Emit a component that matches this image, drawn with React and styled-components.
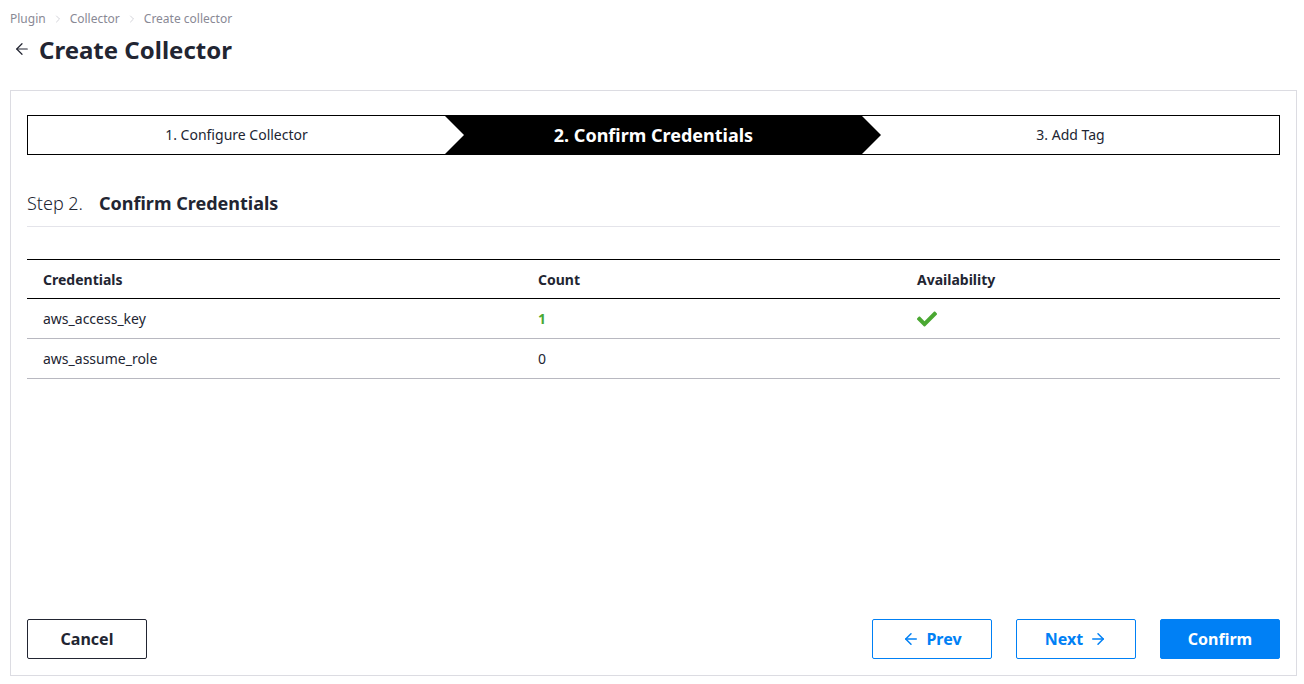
import React from "react";
import styled, {createGlobalStyle} from "styled-components";
import {ArrowLeft, ArrowRight, ChevronRight} from "lucide-react";
import {FaCheck} from "react-icons/fa";

const GlobalStyle = createGlobalStyle`
  html, body {
    margin: 0;
    padding: 0;
    background: #fff;
    font-family: "Noto Sans", "Open Sans", sans-serif;
    color: #222532;
  }
  * {
    box-sizing: border-box;
  }
`;

const Page = styled.div`
  padding: 10px 7px 8px 10px;
  display: flex;
  flex-direction: column;
`;

const Breadcrumb = styled.nav`
  display: flex;
  align-items: center;
  gap: 6px;
  font-size: 12px;
  line-height: 18px;
  color: #898995;
  margin-bottom: 3px;
`;

const Crumb = styled.span`
  color: #898995;
`;

const Sep = styled.span`
  display: inline-flex;
  color: #c4c4cc;
`;

const TitleRow = styled.div`
  display: flex;
  align-items: center;
  gap: 8px;
  height: 36px;
  margin-bottom: 23px;
  padding-left: 3px;
`;

const Title = styled.h1`
  margin: 0;
  font-size: 24px;
  font-weight: 700;
  color: #222532;
`;

const Panel = styled.section`
  border: 1px solid #dcdce2;
  height: 586px;
  padding: 24px 16px 16px 16px;
  display: flex;
  flex-direction: column;
`;

const Stepper = styled.ol`
  list-style: none;
  margin: 0;
  padding: 0;
  display: flex;
  height: 40px;
  border: 1px solid #000;
  overflow: hidden;
`;

const Step = styled.li`
  position: relative;
  flex: 1;
  display: flex;
  align-items: center;
  justify-content: center;
  padding-bottom: ${p => (p.$active ? "0" : "1px")};
  font-size: ${p => (p.$active ? "18px" : "14px")};
  font-weight: ${p => (p.$active ? 700 : 400)};
  color: ${p => (p.$active ? "#fff" : "#222532")};

  &::before {
    content: "";
    display: ${p => (p.$active ? "block" : "none")};
    position: absolute;
    top: 0;
    bottom: 0;
    left: 0;
    right: -19px;
    background: #000;
    clip-path: polygon(0 0, calc(100% - 19px) 0, 100% 50%, calc(100% - 19px) 100%, 0 100%, 19px 50%);
  }
`;

const StepLabel = styled.span`
  position: relative;
  z-index: 1;
`;

const SectionHead = styled.div`
  display: flex;
  align-items: baseline;
  gap: 16px;
  margin-top: 36px;
  padding-bottom: 11px;
  border-bottom: 1px solid #e4e4ea;
`;

const StepNo = styled.span`
  font-size: 18px;
  font-weight: 300;
  color: #222532;
`;

const SectionTitle = styled.span`
  font-size: 18px;
  font-weight: 700;
  color: #222532;
`;

const Table = styled.table`
  margin-top: 32px;
  width: 100%;
  border-collapse: collapse;
  table-layout: fixed;
  font-size: 14px;
`;

const Th = styled.th`
  text-align: left;
  font-weight: 700;
  height: 39px;
  padding: 0 16px;
  width: ${p => p.$w || "auto"};
  border-top: 1px solid #000;
  border-bottom: 1px solid #000;
  color: #222532;
`;

const Td = styled.td`
  height: 40px;
  padding: 0 16px;
  border-bottom: 1px solid #b8b8c0;
  color: ${p => (p.$ok ? "#4aa832" : "#222532")};
  font-weight: ${p => (p.$ok ? 700 : 400)};
`;

const Check = styled(FaCheck)`
  color: #4aa832;
  font-size: 20px;
  display: block;
`;

const Spacer = styled.div`
  flex: 1;
`;

const Footer = styled.div`
  display: flex;
  align-items: center;
  gap: 24px;
`;

const Button = styled.button`
  width: 120px;
  height: 40px;
  border-radius: 2px;
  font-family: inherit;
  font-size: 16px;
  font-weight: 700;
  display: inline-flex;
  align-items: center;
  justify-content: center;
  gap: 6px;
  cursor: pointer;
  border: 1px solid ${p => (p.$variant === "dark" ? "#222532" : "#0080f5")};
  background: ${p => (p.$variant === "primary" ? "#0080f5" : "#fff")};
  color: ${p =>
    p.$variant === "primary" ? "#fff" : p.$variant === "dark" ? "#222532" : "#0080f5"};
`;

const credentials = [
  {name: "aws_access_key", count: 1, available: true},
  {name: "aws_assume_role", count: 0, available: false},
];

export default function App() {
  return (
    <Page>
      <GlobalStyle />
      <Breadcrumb>
        <Crumb>Plugin</Crumb>
        <Sep>
          <ChevronRight size={12} strokeWidth={1.5} />
        </Sep>
        <Crumb>Collector</Crumb>
        <Sep>
          <ChevronRight size={12} strokeWidth={1.5} />
        </Sep>
        <Crumb>Create collector</Crumb>
      </Breadcrumb>
      <TitleRow>
        <ArrowLeft size={18} strokeWidth={1.6} color="#222532" />
        <Title>Create Collector</Title>
      </TitleRow>
      <Panel>
        <Stepper>
          <Step>
            <StepLabel>1. Configure Collector</StepLabel>
          </Step>
          <Step $active>
            <StepLabel>2. Confirm Credentials</StepLabel>
          </Step>
          <Step>
            <StepLabel>3. Add Tag</StepLabel>
          </Step>
        </Stepper>
        <SectionHead>
          <StepNo>Step 2.</StepNo>
          <SectionTitle>Confirm Credentials</SectionTitle>
        </SectionHead>
        <Table>
          <thead>
            <tr>
              <Th $w="495px">Credentials</Th>
              <Th $w="379px">Count</Th>
              <Th>Availability</Th>
            </tr>
          </thead>
          <tbody>
            {credentials.map(c => (
              <tr key={c.name}>
                <Td>{c.name}</Td>
                <Td $ok={c.count > 0}>{c.count}</Td>
                <Td>{c.available && <Check />}</Td>
              </tr>
            ))}
          </tbody>
        </Table>
        <Spacer />
        <Footer>
          <Button $variant="dark">Cancel</Button>
          <Spacer />
          <Button>
            <ArrowLeft size={18} strokeWidth={2} />
            Prev
          </Button>
          <Button>
            Next
            <ArrowRight size={18} strokeWidth={2} />
          </Button>
          <Button $variant="primary">Confirm</Button>
        </Footer>
      </Panel>
    </Page>
  );
}
